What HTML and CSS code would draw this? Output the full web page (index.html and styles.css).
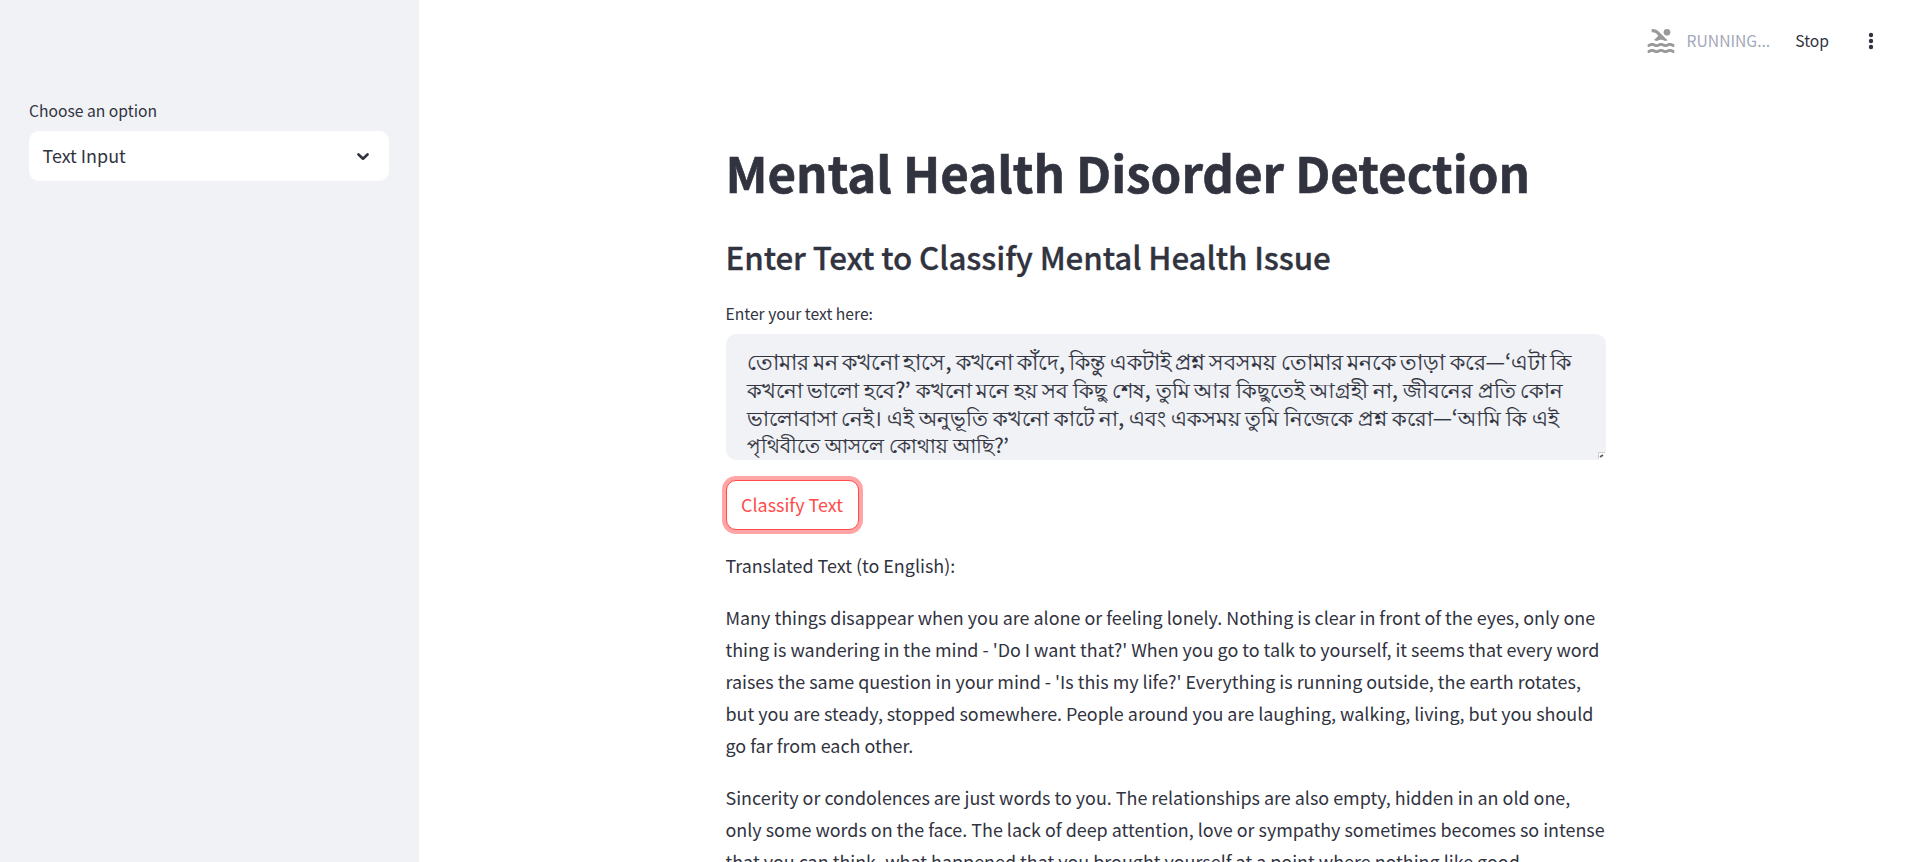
FILE: index.html
```html
<!DOCTYPE html>
<html lang="en">
<head>
<meta charset="utf-8">
<title>Mental Health Disorder Detection</title>
<link rel="stylesheet" href="styles.css">
</head>
<body>
<div class="app">
  <aside class="sidebar">
    <label class="label">Choose an option</label>
    <div class="select">
      <span>Text Input</span>
      <svg class="chevron" viewBox="0 0 12 8"><path d="M1.500 1.500L6 5.700l4.500-4.200"/></svg>
    </div>
  </aside>
  <main class="main">
    <header class="toolbar">
      <svg class="swim" viewBox="0 0 24 24"><path d="M22 21c-1.11 0-1.73-.37-2.18-.64-.37-.22-.6-.36-1.15-.36-.56 0-.78.13-1.15.36-.46.27-1.07.64-2.18.64s-1.73-.37-2.18-.64c-.37-.22-.6-.36-1.15-.36-.56 0-.78.13-1.15.36-.46.27-1.08.64-2.19.64-1.11 0-1.73-.37-2.18-.64-.37-.23-.6-.36-1.15-.36s-.78.13-1.15.36c-.46.27-1.08.64-2.19.64v-2c.56 0 .78-.13 1.15-.36.45-.27 1.07-.64 2.18-.64s1.73.37 2.18.64c.37.23.59.36 1.15.36.56 0 .78-.13 1.15-.36.45-.27 1.07-.64 2.18-.64 1.11 0 1.73.37 2.18.64.37.22.6.36 1.15.36s.78-.13 1.15-.36c.45-.27 1.07-.64 2.18-.64s1.73.37 2.18.64c.37.23.59.36 1.15.36v2zm0-4.5c-1.11 0-1.73-.37-2.18-.64-.37-.22-.6-.36-1.15-.36-.56 0-.78.13-1.15.36-.45.27-1.07.64-2.18.64s-1.73-.37-2.18-.64c-.37-.22-.6-.36-1.15-.36-.56 0-.78.13-1.15.36-.45.27-1.07.64-2.18.64s-1.73-.37-2.18-.64c-.37-.22-.6-.36-1.15-.36s-.78.13-1.15.36c-.47.27-1.09.64-2.2.64v-2c.56 0 .78-.13 1.15-.36.45-.27 1.07-.64 2.18-.64s1.73.37 2.18.64c.37.22.6.36 1.15.36.56 0 .78-.13 1.15-.36.45-.27 1.07-.64 2.18-.64s1.73.37 2.18.64c.37.22.6.36 1.15.36s.78-.13 1.15-.36c.45-.27 1.07-.64 2.18-.64s1.73.37 2.18.64c.37.22.6.36 1.15.36v2zM8.67 12c.56 0 .78-.13 1.15-.36.46-.27 1.08-.64 2.19-.64 1.11 0 1.73.37 2.18.64.37.22.6.36 1.15.36s.78-.13 1.15-.36c.12-.07.26-.15.41-.23L10.48 5C8.93 3.45 7.5 2.99 5 3v2.5c1.82-.01 2.89.39 4 1.5l1 1-3.25 3.25c.31.12.56.27.77.39.37.23.59.36 1.15.36z"/><circle cx="16.500" cy="5.500" r="2.500"/></svg>
      <span class="running">RUNNING...</span>
      <span class="stop">Stop</span>
      <svg class="dots" viewBox="0 0 6 18"><circle cx="3" cy="3" r="2.200"/><circle cx="3" cy="9" r="2.200"/><circle cx="3" cy="15" r="2.200"/></svg>
    </header>
    <div class="content">
      <h1 class="title">Mental Health Disorder Detection</h1>
      <h2 class="subtitle">Enter Text to Classify Mental Health Issue</h2>
      <label class="label">Enter your text here:</label>
      <div class="textarea" lang="bn">
        <div class="line line-1">তোমার মন কখনো হাসে, কখনো কাঁদে, কিন্তু একটাই প্রশ্ন সবসময় তোমার মনকে তাড়া করে—‘এটা কি</div>
        <div class="line line-2">কখনো ভালো হবে?’ কখনো মনে হয় সব কিছু শেষ, তুমি আর কিছুতেই আগ্রহী না, জীবনের প্রতি কোন</div>
        <div class="line line-3">ভালোবাসা নেই। এই অনুভূতি কখনো কাটে না, এবং একসময় তুমি নিজেকে প্রশ্ন করো—‘আমি কি এই</div>
        <div class="line line-4">পৃথিবীতে আসলে কোথায় আছি?’</div>
        <svg class="grip" viewBox="0 0 7 7"><path class="grip-bg" d="M0 0h7v3q-1 3-4 4H0z"/><path class="grip-edge" d="M.5 7V.5H7"/><path class="grip-mark" d="M2 5l3-2"/></svg>
      </div>
      <button class="button">Classify Text</button>
      <div class="prose">
        <p>Translated Text (to English):</p>
        <p>Many things disappear when you are alone or feeling lonely. Nothing is clear in front of the eyes, only one<br>thing is wandering in the mind - 'Do I want that?' When you go to talk to yourself, it seems that every word<br>raises the same question in your mind - 'Is this my life?' Everything is running outside, the earth rotates,<br>but you are steady, stopped somewhere. People around you are laughing, walking, living, but you should<br>go far from each other.</p>
        <p>Sincerity or condolences are just words to you. The relationships are also empty, hidden in an old one,<br>only some words on the face. The lack of deep attention, love or sympathy sometimes becomes so intense<br>that you can think, what happened that you brought yourself at a point where nothing like good</p>
      </div>
    </div>
  </main>
</div>
</body>
</html>
```
FILE: styles.css
```css
* { box-sizing: border-box; }
body {
  margin: 0;
  height: 862px;
  overflow: hidden;
  background: #fff;
  color: #31333f;
  font-family: "Source Sans Pro", "Noto Sans CJK KR", sans-serif;
  font-size: 17.91px;
  line-height: 32px;
}
.app { display: flex; height: 862px; }
.sidebar { width: 419px; flex: none; background: #f0f2f6; padding: 97px 30px 0 29px; }
.label { display: block; font-size: 15.67px; line-height: 28px; height: 34px; white-space: nowrap; }
.select {
  height: 50px;
  border-radius: 10px;
  background: #fff;
  padding: 0 20px 2px 13.5px;
  display: flex;
  align-items: center;
  justify-content: space-between;
}
.chevron {
  width: 12px;
  height: 8px;
  margin-top: 3px;
  fill: none;
  stroke: #31333f;
  stroke-width: 2.6;
  stroke-linecap: round;
  stroke-linejoin: round;
}
.main { flex: 1; min-width: 0; height: 862px; overflow: hidden; }
.toolbar {
  height: 82px;
  padding-right: 43px;
  display: flex;
  align-items: center;
  justify-content: flex-end;
  font-size: 15.67px;
  white-space: nowrap;
}
.swim { width: 32px; height: 32px; fill: #999; margin-right: 10px; }
.running { color: #a3a8b8; margin-right: 25px; }
.stop { margin-right: 39px; }
.dots { width: 6px; height: 18px; fill: #31333f; }
.content { width: 880px; margin-left: 306.5px; padding-top: 57px; }
.title {
  margin: 0;
  height: 87px;
  font-size: 49.24px;
  font-weight: 700;
  line-height: 66px;
  letter-spacing: -0.01px;
  -webkit-text-stroke: 0.6px #31333f;
  white-space: nowrap;
}
.subtitle {
  margin: 0;
  height: 74px;
  padding-top: 10px;
  font-size: 31.33px;
  font-weight: 500;
  line-height: 42px;
  letter-spacing: -0.11px;
  -webkit-text-stroke: 0.3px #31333f;
  white-space: nowrap;
}
.textarea {
  position: relative;
  height: 126px;
  border-radius: 10px;
  background: #f0f2f6;
  padding: 13px 21px 0;
  overflow: hidden;
  -webkit-text-stroke: 0.2px #31333f;
}
.line { height: 28px; line-height: 28px; white-space: nowrap; }
.line-1 { font-size: 21.7px; word-spacing: -0.55px; }
.line-2 { font-size: 21.4px; word-spacing: 0.05px; }
.line-3 { font-size: 21.4px; word-spacing: 0.15px; }
.line-4 { font-size: 20px; word-spacing: 0.8px; }
.grip { position: absolute; right: 1px; bottom: 1px; width: 7px; height: 7px; }
.grip-bg { fill: #fff; }
.grip-edge { fill: none; stroke: #ccc; stroke-width: 1; }
.grip-mark { stroke: #555; stroke-width: 1.6; }
.button {
  display: block;
  margin: 20px 0 19px;
  width: 133px;
  height: 50px;
  padding: 0 0 2px;
  border: 1px solid #ff4b4b;
  border-radius: 10px;
  background: #fff;
  box-shadow: 0 0 0 4px rgba(255, 75, 75, 0.5);
  color: #ff4b4b;
  font: inherit;
}
.prose p { margin: 0 0 20px; white-space: nowrap; }
```
